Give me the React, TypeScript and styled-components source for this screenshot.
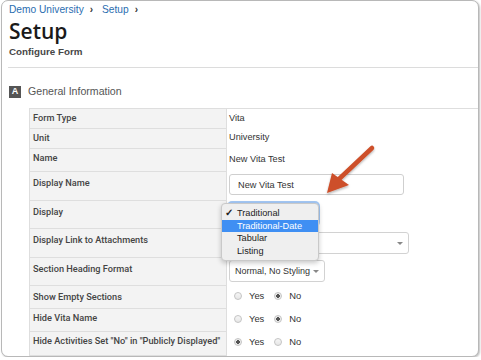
import * as React from "react";
import styled, { createGlobalStyle } from "styled-components";

const GlobalStyle = createGlobalStyle`
  html, body {
    margin: 0;
    padding: 0;
    background: #ffffff;
  }
  body {
    font-family: "Liberation Sans", Arial, sans-serif;
    color: #333;
  }
`;

const Window = styled.div`
  position: relative;
  box-sizing: border-box;
  width: 478px;
  height: 357px;
  margin-left: 1px;
  border: 1px solid #b8b8b8;
  border-radius: 7px;
  overflow: hidden;
  background: #fff;
  box-shadow: 1px 1px 2px rgba(0, 0, 0, 0.25);
`;

const Header = styled.header`
  padding: 3px 0 0 7px;
`;

const Crumbs = styled.nav`
  display: flex;
  align-items: center;
  gap: 6px;
  font-size: 10.2px;
  line-height: 12px;
  color: #2a6db0;
`;

const Chevron = styled.span`
  color: #333;
  font-weight: bold;
  font-size: 10px;
  margin-right: 3px;
`;

const Title = styled.h1`
  margin: 2px 0 0;
  font-family: "Open Sans", sans-serif;
  font-weight: 600;
  font-size: 21px;
  line-height: 26px;
  color: #1a1a1a;
`;

const Subtitle = styled.h2`
  margin: 2px 0 0;
  font-size: 9.8px;
  line-height: 12px;
  font-weight: bold;
  color: #474747;
`;

const Divider = styled.hr`
  margin: 9px 0 0 6px;
  border: 0;
  border-top: 1px solid #dcdcdc;
`;

const SectionHead = styled.div`
  display: flex;
  align-items: center;
  gap: 7px;
  margin: 17px 0 0 7px;
  font-size: 10.6px;
  line-height: 13px;
  color: #555;
`;

const Badge = styled.span`
  display: inline-flex;
  align-items: center;
  justify-content: center;
  width: 12px;
  height: 12px;
  background: #555;
  color: #fff;
  font-weight: bold;
  font-size: 9px;
`;

const Table = styled.div`
  margin: 10px 0 0 27px;
  border-top: 1px solid #dedede;
`;

const Row = styled.div<{ $h: number }>`
  display: grid;
  grid-template-columns: 198px 1fr;
  height: ${(p) => p.$h}px;
`;

const Label = styled.div<{ $pad: number }>`
  box-sizing: border-box;
  background: #f3f3f3;
  border-left: 1px solid #dedede;
  border-right: 1px solid #dedede;
  border-bottom: 1px solid #dedede;
  padding: ${(p) => p.$pad}px 0 0 3px;
  font-family: "Roboto", sans-serif;
  font-weight: 500;
  font-size: 9.2px;
  line-height: 12px;
  color: #444;
  white-space: nowrap;
`;

const Value = styled.div<{ $pad?: number }>`
  padding: ${(p) => p.$pad ?? 3}px 0 0 2px;
  font-size: 9.2px;
  line-height: 12px;
  color: #333;
`;

const TextInput = styled.div`
  box-sizing: border-box;
  width: 175px;
  height: 21px;
  margin-top: -1px;
  padding-left: 8px;
  border: 1px solid #cfcfcf;
  border-radius: 3px;
  display: flex;
  align-items: center;
  font-size: 9.2px;
  color: #333;
`;

const Select = styled.div<{ $w: number; $focus?: boolean }>`
  box-sizing: border-box;
  width: ${(p) => p.$w}px;
  height: 22px;
  padding: 0 5px 0 5px;
  border: 1px solid ${(p) => (p.$focus ? "#6fa7ec" : "#d2d2d2")};
  border-radius: 3px;
  display: flex;
  align-items: center;
  gap: 3px;
  font-size: 9px;
  color: #333;
  white-space: nowrap;
  box-shadow: ${(p) => (p.$focus ? "0 0 0 2px rgba(90, 155, 235, 0.55)" : "none")};
  &::after {
    content: "";
    flex: none;
    margin-left: auto;
    border-left: 3px solid transparent;
    border-right: 3px solid transparent;
    border-top: 3px solid #888;
  }
`;

const Radios = styled.div`
  display: flex;
  align-items: center;
  padding-left: 5px;
`;

const Radio = styled.span<{ $on?: boolean }>`
  box-sizing: border-box;
  width: 8px;
  height: 8px;
  border-radius: 50%;
  border: 1px solid #c4c4c4;
  background: ${(p) =>
    p.$on
      ? "radial-gradient(circle, #555 0 1.6px, #ececec 2px)"
      : "linear-gradient(#f6f6f6, #e6e6e6)"};
  margin-right: 7px;
`;

const RadioText = styled.span`
  font-size: 9.4px;
  margin-right: 10px;
`;

const Popup = styled.div`
  position: absolute;
  left: 219px;
  top: 202px;
  width: 98px;
  box-sizing: border-box;
  padding: 3px 0 3px;
  background: #efefef;
  border: 1px solid #c9c9c9;
  border-radius: 4px;
  box-shadow: 0 2px 5px rgba(0, 0, 0, 0.22);
  font-size: 9.2px;
`;

const Option = styled.div<{ $active?: boolean }>`
  position: relative;
  height: 12.5px;
  line-height: 12.5px;
  padding-left: 15px;
  background: ${(p) => (p.$active ? "#3f8ff3" : "transparent")};
  color: ${(p) => (p.$active ? "#fff" : "#222")};
`;

const Check = styled.span`
  position: absolute;
  left: 3px;
  top: 0;
  font-size: 10px;
  font-weight: bold;
`;

const Arrow = styled.svg`
  position: absolute;
  left: 0;
  top: 0;
  pointer-events: none;
  overflow: visible;
`;

const YesNo: React.FC<{ yes: boolean }> = ({ yes }) => (
  <Radios>
    <Radio $on={yes} />
    <RadioText>Yes</RadioText>
    <Radio $on={!yes} />
    <RadioText>No</RadioText>
  </Radios>
);

const App: React.FC = () => {
  return (
    <>
      <GlobalStyle />
      <Window>
        <Header>
          <Crumbs>
            <span>Demo University</span>
            <Chevron>›</Chevron>
            <span>Setup</span>
            <Chevron>›</Chevron>
          </Crumbs>
          <Title>Setup</Title>
          <Subtitle>Configure Form</Subtitle>
        </Header>
        <Divider />
        <SectionHead>
          <Badge>A</Badge>
          <span>General Information</span>
        </SectionHead>
        <Table>
          <Row $h={20}>
            <Label $pad={3}>Form Type</Label>
            <Value>Vita</Value>
          </Row>
          <Row $h={20}>
            <Label $pad={3}>Unit</Label>
            <Value $pad={2}>University</Value>
          </Row>
          <Row $h={23}>
            <Label $pad={3}>Name</Label>
            <Value $pad={4}>New Vita Test</Value>
          </Row>
          <Row $h={29}>
            <Label $pad={5}>Display Name</Label>
            <Value>
              <TextInput>New Vita Test</TextInput>
            </Value>
          </Row>
          <Row $h={28}>
            <Label $pad={5}>Display</Label>
            <Value $pad={2}>
              <Select $w={89} $focus />
            </Value>
          </Row>
          <Row $h={29}>
            <Label $pad={5}>Display Link to Attachments</Label>
            <Value>
              <Select $w={180} />
            </Value>
          </Row>
          <Row $h={28}>
            <Label $pad={5}>Section Heading Format</Label>
            <Value $pad={2}>
              <Select $w={96}>Normal, No Styling</Select>
            </Value>
          </Row>
          <Row $h={23}>
            <Label $pad={5}>Show Empty Sections</Label>
            <Value $pad={4}>
              <YesNo yes={false} />
            </Value>
          </Row>
          <Row $h={23}>
            <Label $pad={3}>Hide Vita Name</Label>
            <Value $pad={4}>
              <YesNo yes={false} />
            </Value>
          </Row>
          <Row $h={24}>
            <Label $pad={3}>Hide Activities Set "No" in "Publicly Displayed"</Label>
            <Value $pad={4}>
              <YesNo yes />
            </Value>
          </Row>
          <Row $h={24}>
            <Label $pad={3} />
            <Value />
          </Row>
        </Table>

        <Popup>
          <Option>
            <Check>✓</Check>Traditional
          </Option>
          <Option $active>Traditional-Date</Option>
          <Option>Tabular</Option>
          <Option>Listing</Option>
        </Popup>

        <Arrow width="478" height="357" viewBox="0 0 478 357">
          <defs>
            <filter id="sh" x="-20%" y="-20%" width="140%" height="140%">
              <feDropShadow dx="0" dy="1.5" stdDeviation="1.2" floodColor="#000" floodOpacity="0.3" />
            </filter>
          </defs>
          <g filter="url(#sh)">
            <line x1="370" y1="147" x2="336" y2="179" stroke="#cd4f29" strokeWidth="4.5" strokeLinecap="round" />
            <polygon points="325,192 330,172 347,184" fill="#cd4f29" />
          </g>
        </Arrow>
      </Window>
    </>
  );
};

export default App;
